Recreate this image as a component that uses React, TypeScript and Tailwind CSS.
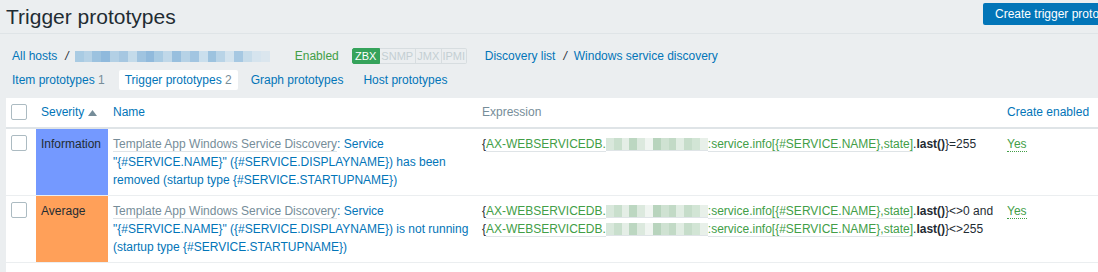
import React from "react";

const hostBlur = [
  "bg-[#a9cbe3]", "bg-[#b6d2e6]", "bg-[#9cc2df]", "bg-[#8fb9dc]", "bg-[#b3d0e5]", "bg-[#a6c7e1]",
  "bg-[#c4dbea]", "bg-[#a0c4e0]", "bg-[#91badc]", "bg-[#a9cbe3]", "bg-[#c0d8e9]", "bg-[#98bfde]",
  "bg-[#b6d2e6]", "bg-[#a2c5e1]", "bg-[#cadfed]", "bg-[#9dc3df]", "bg-[#b9d4e7]", "bg-[#d3e3ee]",
  "bg-[#a6c8e2]", "bg-[#c7dcea]", "bg-[#d6e4ee]", "bg-[#dbe6ee]",
];

const exprBlur = [
  "bg-[#d9e8dc]", "bg-[#c9dfcd]", "bg-[#e4eee6]", "bg-[#bcd7c1]", "bg-[#dce9de]", "bg-[#f0f5f1]",
  "bg-[#b8d4bd]", "bg-[#cfe2d2]", "bg-[#c2dac6]", "bg-[#e1ede3]", "bg-[#c6ddca]", "bg-[#d2e5d5]",
  "bg-[#e8f0e9]",
];

function HostBlur() {
  return (
    <span className="inline-flex h-[11px] w-[195px] ml-[6px] mr-[24px]">
      {hostBlur.map((c, i) => (
        <span key={i} className={`${c} flex-1 h-full`} />
      ))}
    </span>
  );
}

function ExprBlur() {
  return (
    <span className="inline-flex h-[12px] w-[102px] align-[-2px] border-b border-[#dfe4e7] box-content">
      {exprBlur.map((c, i) => (
        <span key={i} className={`${c} flex-1 h-full`} />
      ))}
    </span>
  );
}

function Checkbox() {
  return <div className="w-[16px] h-[16px] border border-[#acbbc2] rounded-[2px] bg-white" />;
}

function G({ children }: { children: React.ReactNode }) {
  return <span className="text-[#429e47] border-b border-[#dfe4e7]">{children}</span>;
}

function ExprPart({ tail }: { tail: string }) {
  return (
    <>
      {"{"}
      <G>AX-WEBSERVICEDB.</G>
      <ExprBlur />
      <G>:service.info[{"{#SERVICE.NAME}"},state]</G>.<b className="font-bold">last()</b>
      {"}" + tail}
    </>
  );
}

function Yes() {
  return <span className="text-[#429e47] border-b border-dotted border-[#429e47]">Yes</span>;
}

const grid = "grid grid-cols-[30px_72px_369px_525px_1fr]";

export default function App() {
  return (
    <div
      className="w-[1098px] h-[272px] overflow-hidden bg-[#ebeef0] text-[12px] leading-[18px] text-[#1f2c33]"
      style={{ fontFamily: '"Liberation Sans", Arial, sans-serif' }}
    >
      {/* Header */}
      <div className="h-[34px] border-b border-[#dfe4e7] flex items-start justify-between pl-[6px]">
        <h1 className="text-[21px] leading-[24px] mt-[5px] text-[#1f2c33]">Trigger prototypes</h1>
        <div className="mt-[3px] h-[22px] bg-[#0275b8] text-white pl-[12px] w-[115px] whitespace-nowrap overflow-hidden leading-[22px] rounded-l-[2px]">
          Create trigger prototype
        </div>
      </div>

      {/* Breadcrumbs */}
      <div className="mt-[12px] h-[20px] flex items-center pl-[12px] whitespace-nowrap">
        <span className="text-[#0275b8]">All hosts</span>
        <span className="ml-[8px] text-[#1f2c33] italic">/</span>
        <HostBlur />
        <span className="ml-[1px] text-[#429e47]">Enabled</span>
        <span className="ml-[13px] flex h-[16px] text-[11px] leading-[14px] shrink-0">
          <span className="w-[28px] text-center bg-[#35a35b] text-white border border-[#35a35b] rounded-l-[2px]">ZBX</span>
          <span className="w-[36px] text-center text-[#c4ced3] border border-[#d7dde0] border-l-0">SNMP</span>
          <span className="w-[26px] text-center text-[#c4ced3] border border-[#d7dde0] border-l-0">JMX</span>
          <span className="w-[25px] text-center text-[#c4ced3] border border-[#d7dde0] border-l-0 rounded-r-[2px]">IPMI</span>
        </span>
        <span className="ml-[18px] text-[#0275b8]">Discovery list</span>
        <span className="ml-[8px] text-[#1f2c33] italic">/</span>
        <span className="ml-[7px] text-[#0275b8]">Windows service discovery</span>
      </div>

      {/* Tabs */}
      <div className="mt-[4px] h-[20px] flex items-center pl-[12px] whitespace-nowrap">
        <span className="text-[#0275b8]">
          Item prototypes <span className="text-[#768d99]">1</span>
        </span>
        <span className="ml-[14px] bg-white h-[20px] px-[6px] flex items-center rounded-[2px] text-[#0275b8]">
          Trigger prototypes&nbsp;<span className="text-[#768d99]">2</span>
        </span>
        <span className="ml-[13px] text-[#0275b8]">Graph prototypes</span>
        <span className="ml-[20px] text-[#0275b8]">Host prototypes</span>
      </div>

      {/* Table */}
      <div className="mt-[8px] ml-[6px] bg-white">
        <div className={`${grid} border-b-2 border-[#dfe4e7]`}>
          <div className="pl-[5px] pt-[6px] pb-[5px]">
            <Checkbox />
          </div>
          <div className="px-[5px] pt-[5px] pb-[6px] text-[#0275b8] flex items-center gap-[4px]">
            Severity
            <svg width="9" height="6" viewBox="0 0 9 6" className="mt-[1px]">
              <path d="M0 6 L4.5 0 L9 6 Z" fill="#768d99" />
            </svg>
          </div>
          <div className="px-[5px] pt-[5px] pb-[6px] text-[#0275b8]">Name</div>
          <div className="px-[5px] pt-[5px] pb-[6px] text-[#768d99]">Expression</div>
          <div className="px-[5px] pt-[5px] pb-[6px] text-[#0275b8] whitespace-nowrap">Create enabled</div>
        </div>

        <div className={`${grid} border-b border-[#ebeef0]`}>
          <div className="pl-[5px] pt-[6px]">
            <Checkbox />
          </div>
          <div className="px-[5px] py-[6px] bg-[#7499ff]">Information</div>
          <div className="px-[5px] py-[6px] text-[#0275b8]">
            <span className="text-[#768d99] border-b border-[#dfe4e7]">Template App Windows Service Discovery</span>: Service
            <br />
            "{"{#SERVICE.NAME}"}" ({"{#SERVICE.DISPLAYNAME}"}) has been
            <br />
            removed (startup type {"{#SERVICE.STARTUPNAME}"})
          </div>
          <div className="px-[5px] py-[6px] whitespace-nowrap">
            <ExprPart tail="=255" />
          </div>
          <div className="px-[5px] py-[6px]">
            <Yes />
          </div>
        </div>

        <div className={`${grid} border-b border-[#ebeef0]`}>
          <div className="pl-[5px] pt-[6px]">
            <Checkbox />
          </div>
          <div className="px-[5px] py-[6px] bg-[#ffa059]">Average</div>
          <div className="px-[5px] py-[6px] text-[#0275b8]">
            <span className="text-[#768d99] border-b border-[#dfe4e7]">Template App Windows Service Discovery</span>: Service
            <br />
            "{"{#SERVICE.NAME}"}" ({"{#SERVICE.DISPLAYNAME}"}) is not running
            <br />
            (startup type {"{#SERVICE.STARTUPNAME}"})
          </div>
          <div className="px-[5px] py-[6px] whitespace-nowrap">
            <ExprPart tail="<>0 and" />
            <br />
            <ExprPart tail="<>255" />
          </div>
          <div className="px-[5px] py-[6px]">
            <Yes />
          </div>
        </div>
        <div className="h-[20px]" />
      </div>
    </div>
  );
}
